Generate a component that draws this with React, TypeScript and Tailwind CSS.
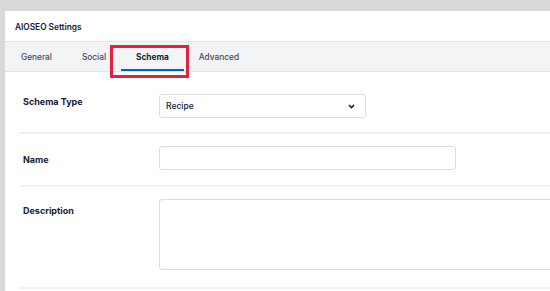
import React from "react";

const tabs = ["General", "Social", "Schema", "Advanced"];

const Row = ({
  label,
  labelPad,
  fieldPad,
  height,
  children,
}: {
  label: string;
  labelPad: string;
  fieldPad: string;
  height: string;
  children: React.ReactNode;
}) => (
  <div className={`flex border-b-2 border-[#f1f1f1] ${height}`}>
    <div
      className={`w-[140px] shrink-0 pl-[4px] text-[9px] leading-[12px] font-bold text-[#141b38] ${labelPad}`}
    >
      {label}
    </div>
    <div className={`flex-1 ${fieldPad}`}>{children}</div>
  </div>
);

export default function App() {
  const active = "Schema";

  return (
    <div
      className="w-[550px] h-[291px] overflow-hidden bg-[#d9d9d9] pl-[5px] pt-[11px]"
      style={{ fontFamily: "Inter, 'Liberation Sans', sans-serif" }}
    >
      <div className="relative h-full bg-white">
        <div className="flex h-[30px] items-center pl-[10px] pt-[3px] text-[8.3px] font-semibold text-[#141b38]">
          AIOSEO Settings
        </div>

        <div className="flex h-[31px] border-y border-[#e4e4e4] bg-[#f3f4f6] pl-[1px]">
          {tabs.map((t) => (
            <div
              key={t}
              className={`flex items-center px-[15px] pt-[4px] text-[8.3px] border-b-2 ${
                t === active
                  ? "font-bold text-[#141b38] border-[#005ae0]"
                  : "font-medium text-[#434960] border-transparent"
              }`}
            >
              {t}
            </div>
          ))}
        </div>

        {/* annotation box round the active tab */}
        <div className="absolute left-[105px] top-[34px] h-[33px] w-[79px] border-[3px] border-[#e3213f]" />

        <div className="pl-[14px]">
          <Row label="Schema Type" labelPad="pt-[24px]" fieldPad="pt-[22px]" height="h-[62px]">
            <div className="flex h-[24px] w-[207px] items-center justify-between rounded-[3px] border border-[#dcdde1] pl-[6px] pr-[10px] text-[8.5px] font-medium text-[#141b38]">
              <span>Recipe</span>
              <svg width="7" height="5" viewBox="0 0 7 5" fill="none">
                <path d="M1 1l2.5 2.5L6 1" stroke="#141b38" strokeWidth="1.6" />
              </svg>
            </div>
          </Row>
          <Row label="Name" labelPad="pt-[20px]" fieldPad="pt-[12px]" height="h-[53px]">
            <div className="h-[24px] w-[297px] rounded-[3px] border border-[#dcdde1]" />
          </Row>
          <Row label="Description" labelPad="pt-[18px]" fieldPad="pt-[12px]" height="h-[102px]">
            <div className="h-[71px] w-[420px] rounded-[3px] border border-[#dcdde1]" />
          </Row>
        </div>
      </div>
    </div>
  );
}
